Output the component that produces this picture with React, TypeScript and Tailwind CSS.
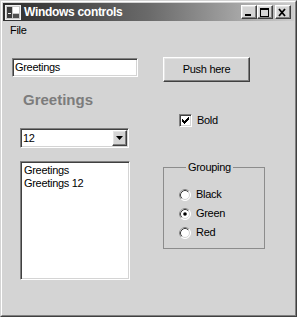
import React from "react";

// classic 3D borders
const sunken =
  "border border-t-[#808080] border-l-[#808080] border-r-white border-b-white shadow-[inset_1px_1px_0_#404040,inset_-1px_-1px_0_#d4d4d4]";
const raised =
  "border border-t-white border-l-white border-r-[#404040] border-b-[#404040] shadow-[inset_-1px_-1px_0_#808080,inset_1px_1px_0_#e4e4e4]";

function AppIcon() {
  return (
    <svg width="16" height="15" viewBox="0 0 16 15">
      <rect x="0.5" y="0.5" width="15" height="14" fill="#c8c8c8" stroke="#f0f0f0" />
      <rect x="2" y="2" width="5" height="11" fill="#3c3c3c" />
      <rect x="3" y="8" width="3" height="1" fill="#f0f0f0" />
      <rect x="8" y="2" width="6" height="6" fill="#ffffff" />
      <rect x="8" y="9" width="6" height="4" fill="#505050" />
    </svg>
  );
}

function CaptionButton({ kind }: { kind: "min" | "max" | "close" }) {
  return (
    <div className={`w-[16px] h-[14px] bg-[#d4d4d4] flex items-center justify-center ${raised}`}>
      <svg width="10" height="9" viewBox="0 0 10 9">
        {kind === "min" && <rect x="1" y="6" width="6" height="2" fill="#000" />}
        {kind === "max" && (
          <>
            <rect x="0.5" y="0.5" width="8" height="8" fill="none" stroke="#000" />
            <rect x="0" y="0" width="9" height="2" fill="#000" />
          </>
        )}
        {kind === "close" && (
          <path d="M1 1 L7 8 M7 1 L1 8" stroke="#000" strokeWidth="1.8" fill="none" />
        )}
      </svg>
    </div>
  );
}

function CheckBox() {
  return (
    <div className={`w-[13px] h-[13px] bg-white ${sunken} flex items-center justify-center`}>
      <svg width="7" height="7" viewBox="0 0 7 7" shapeRendering="crispEdges">
        <path d="M0 2 L2 4 L6 0 L7 0 L7 3 L2 7 L0 5 Z" fill="#000" />
      </svg>
    </div>
  );
}

function Radio({ checked }: { checked?: boolean }) {
  return (
    <svg width="12" height="12" viewBox="0 0 12 12">
      <circle cx="6" cy="6" r="5.5" fill="#fff" stroke="#ffffff" />
      <path d="M2.11 9.89 A5.5 5.5 0 0 1 9.89 2.11" stroke="#808080" fill="none" />
      <circle cx="6" cy="6" r="4.5" fill="none" stroke="#d4d4d4" />
      <path d="M2.82 9.18 A4.5 4.5 0 0 1 9.18 2.82" stroke="#404040" fill="none" />
      {checked && <circle cx="6" cy="6" r="1.8" fill="#000" />}
    </svg>
  );
}

export default function App() {
  return (
    <div className="w-[297px] h-[317px] border border-t-[#d4d4d4] border-l-[#d4d4d4] border-r-[#404040] border-b-[#404040] font-['Liberation_Sans',Arial,sans-serif] text-[11px] leading-[13px] text-black">
      <div className="h-full flex flex-col p-px bg-[#d4d4d4] border border-t-white border-l-white border-r-[#808080] border-b-[#808080]">
        {/* title bar */}
        <div className="h-[18px] flex items-center pl-[2px] pr-[3px] bg-gradient-to-r from-[#2e2e2e] via-[#6a6a6a] to-[#cccccc]">
          <AppIcon />
          <span className="ml-[3px] text-white font-bold text-[12px] tracking-[-0.3px]">Windows controls</span>
          <div className="ml-auto flex items-center">
            <CaptionButton kind="min" />
            <CaptionButton kind="max" />
            <div className="ml-[2px]">
              <CaptionButton kind="close" />
            </div>
          </div>
        </div>

        {/* menu */}
        <div className="h-[19px] flex items-center pl-[7px] tracking-[-0.3px]">File</div>

        {/* client area */}
        <div className="flex flex-1 tracking-[-0.3px]">
          <div className="flex flex-col w-[151px] ml-[9px]">
            <div className={`mt-[18px] w-[126px] h-[19px] bg-white flex items-center pl-[2px] ${sunken}`}>
              Greetings
            </div>
            <div className="mt-[14px] ml-[11px] text-[15px] leading-[17px] font-bold text-[#7c7c7c] tracking-normal">
              Greetings
            </div>
            <div className={`mt-[20px] ml-[8px] w-[109px] h-[20px] bg-white flex items-center justify-between pl-[2px] pr-[1px] ${sunken}`}>
              <span>12</span>
              <div className={`w-[15px] h-[16px] bg-[#d4d4d4] flex items-center justify-center ${raised}`}>
                <svg width="7" height="4" viewBox="0 0 7 4">
                  <path d="M0 0 H7 L3.5 4 Z" fill="#000" />
                </svg>
              </div>
            </div>
            <div className={`mt-[13px] ml-[8px] w-[110px] h-[119px] bg-white px-[3px] pt-[2px] ${sunken}`}>
              <div>Greetings</div>
              <div>Greetings 12</div>
            </div>
          </div>

          <div className="flex flex-col">
            <button className={`mt-[17px] w-[87px] h-[25px] bg-[#d4d4d4] flex items-center justify-center ${raised}`}>
              Push here
            </button>
            <div className="mt-[32px] ml-[16px] h-[13px] flex items-center gap-[5px]">
              <CheckBox />
              <span>Bold</span>
            </div>
            <fieldset className="mt-[34px] w-[102px] h-[88px] border border-[#8c8c8c] pl-[15px] pt-[11px]">
              <legend className="ml-[7px] px-[2px]">Grouping</legend>
              {[
                ["Black", false],
                ["Green", true],
                ["Red", false],
              ].map(([label, checked]) => (
                <div key={label as string} className="h-[19px] flex items-center gap-[5px]">
                  <Radio checked={checked as boolean} />
                  <span>{label}</span>
                </div>
              ))}
            </fieldset>
          </div>
        </div>
      </div>
    </div>
  );
}
